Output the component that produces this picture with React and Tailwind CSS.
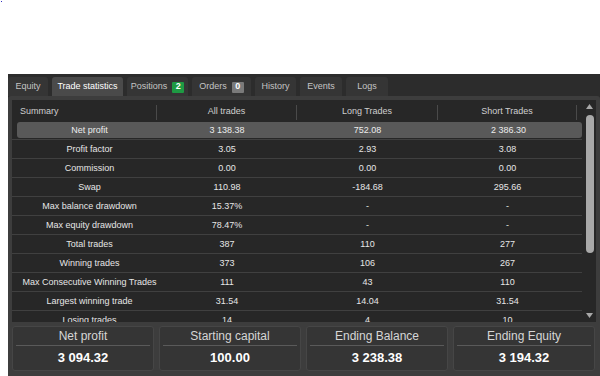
export default function App() {
  const rows = [
    ["Net profit", "3 138.38", "752.08", "2 386.30"],
    ["Profit factor", "3.05", "2.93", "3.08"],
    ["Commission", "0.00", "0.00", "0.00"],
    ["Swap", "110.98", "-184.68", "295.66"],
    ["Max balance drawdown", "15.37%", "-", "-"],
    ["Max equity drawdown", "78.47%", "-", "-"],
    ["Total trades", "387", "110", "277"],
    ["Winning trades", "373", "106", "267"],
    ["Max Consecutive Winning Trades", "111", "43", "110"],
    ["Largest winning trade", "31.54", "14.04", "31.54"],
    ["Losing trades", "14", "4", "10"],
  ];
  const cards = [
    ["Net profit", "3 094.32"],
    ["Starting capital", "100.00"],
    ["Ending Balance", "3 238.38"],
    ["Ending Equity", "3 194.32"],
  ];
  return (
    <div className="w-[600px] h-[376px] bg-white relative overflow-hidden font-['Liberation_Sans',Arial,sans-serif]">
      <div className="absolute left-[1px] top-[1px] w-[1px] h-[1px] bg-[#3030c0]" />
      <div className="pt-[74px] pl-[8px]">
        <div className="w-[592px] h-[302px] flex flex-col bg-[#2c2c2c]">
          {/* tabs */}
          <div className="h-[22px] flex items-end gap-[4px] text-[9px] text-[#c4c4c4]">
            <div className="h-[19px] w-[40px] flex items-center justify-center pt-[1px] bg-[#353535] rounded-t-[3px]">Equity</div>
            <div className="h-[19px] w-[71px] flex items-center justify-center pt-[1px] bg-[#4a4a4a] rounded-t-[3px] text-white">Trade statistics</div>
            <div className="h-[19px] w-[61px] flex items-center justify-center pt-[1px] gap-[5px] bg-[#353535] rounded-t-[3px]">
              <span>Positions</span>
              <span className="w-[12px] h-[11px] flex items-center justify-center bg-[#1e9a43] text-white font-bold rounded-[1px]">2</span>
            </div>
            <div className="h-[19px] w-[59px] flex items-center justify-center pt-[1px] gap-[5px] bg-[#353535] rounded-t-[3px]">
              <span>Orders</span>
              <span className="w-[12px] h-[11px] flex items-center justify-center bg-[#7a7a7a] text-white font-bold rounded-[1px]">0</span>
            </div>
            <div className="h-[19px] w-[41px] flex items-center justify-center pt-[1px] bg-[#353535] rounded-t-[3px]">History</div>
            <div className="h-[19px] w-[42px] flex items-center justify-center pt-[1px] bg-[#353535] rounded-t-[3px]">Events</div>
            <div className="h-[19px] w-[42px] flex items-center justify-center pt-[1px] bg-[#353535] rounded-t-[3px]">Logs</div>
          </div>
          {/* frame */}
          <div className="flex-1 bg-[#3d3d3d] rounded-t-[3px] px-[4px] pt-[4px] pb-[5px] flex flex-col gap-[4px]">
            <div className="h-[222px] bg-[#272727] flex">
              <div className="flex-1 flex flex-col overflow-hidden">
                <div className="h-[21px] shrink-0 grid grid-cols-[145px_140px_141px_139px] items-center pt-[3px] text-[9px] text-[#cfcfcf]">
                  <div className="pl-[8px] h-[15px] flex items-center border-r border-[#4a4a4a]">Summary</div>
                  <div className="h-[15px] flex items-center justify-center border-r border-[#4a4a4a]">All trades</div>
                  <div className="h-[15px] flex items-center justify-center border-r border-[#4a4a4a]">Long Trades</div>
                  <div className="h-[15px] flex items-center justify-center border-r border-[#4a4a4a]">Short Trades</div>
                </div>
                {rows.map((r, i) => (
                  <div key={i} className="h-[19px] shrink-0 border-b border-[#404040] w-[570px]">
                    {i === 0 ? (
                      <div className="ml-[5px] mt-[1px] h-[16px] bg-[#595959] rounded-[3px] grid grid-cols-[140px_140px_141px_1fr] items-center pt-[1px] text-[9px] text-[#ececec]">
                        <div className="pl-[5px] text-center">{r[0]}</div>
                        <div className="text-center">{r[1]}</div>
                        <div className="text-center">{r[2]}</div>
                        <div className="text-center pr-[3px]">{r[3]}</div>
                      </div>
                    ) : (
                      <div className="h-[18px] grid grid-cols-[145px_140px_141px_139px] items-center pt-[2px] text-[9px] text-[#e6e6e6]">
                        <div className="pl-[10px] text-center whitespace-nowrap">{r[0]}</div>
                        <div className="text-center">{r[1]}</div>
                        <div className="text-center">{r[2]}</div>
                        <div className="text-center">{r[3]}</div>
                      </div>
                    )}
                  </div>
                ))}
              </div>
              {/* scrollbar */}
              <div className="w-[13px] flex flex-col items-center pt-[4px] pb-[4px]">
                <svg width="7" height="5" viewBox="0 0 7 5"><path d="M3.5 0 L7 5 L0 5 Z" fill="#a8a8a8" /></svg>
                <div className="mt-[6px] w-[8px] h-[138px] rounded-full bg-[#a9a9a9]" />
                <div className="flex-1" />
                <svg width="7" height="5" viewBox="0 0 7 5"><path d="M0 0 L7 0 L3.5 5 Z" fill="#a8a8a8" /></svg>
              </div>
            </div>
            <div className="flex-1 grid grid-cols-4 gap-[5px] pr-[1px]">
              {cards.map((c, i) => (
                <div key={i} className="bg-[#353535] border border-[#464646] rounded-[3px] flex flex-col items-center px-[3px]">
                  <div className="h-[15px] flex items-end text-[12px] text-[#d6d6d6] leading-none">{c[0]}</div>
                  <div className="w-full h-[1px] bg-[#5a5a5a] mt-[3px]" />
                  <div className="text-[13px] font-bold text-white leading-none mt-[5px]">{c[1]}</div>
                </div>
              ))}
            </div>
          </div>
        </div>
      </div>
    </div>
  );
}
